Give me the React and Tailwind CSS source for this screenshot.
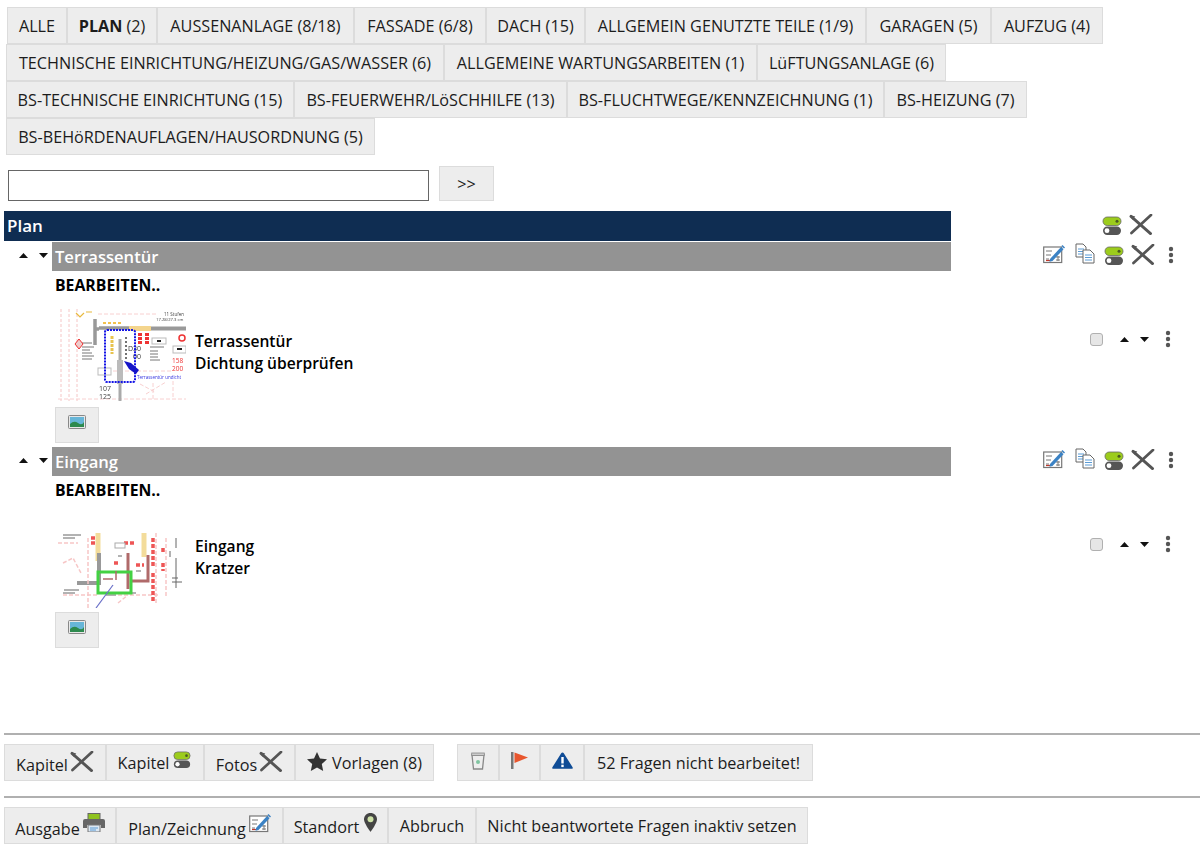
const font = "font-['Open_Sans','Noto_Sans',sans-serif]";

function Btn({ className = "", children }) {
  return (
    <div className={"flex h-full shrink-0 items-center justify-center whitespace-nowrap border border-[#dcdcdc] bg-[#ededed] pt-[2px] text-[16.2px] text-[#1c1c1c] " + className}>
      {children}
    </div>
  );
}

function Toggle({ className = "" }) {
  return (
    <svg viewBox="0 0 20 20" className={className}>
      <rect x="1" y="1" width="18" height="8.500" rx="4.200" fill="#9ccc1c" stroke="#666" strokeWidth="0.800" />
      <circle cx="15" cy="5.200" r="1.500" fill="#4a5a20" />
      <rect x="1" y="10.500" width="18" height="8.500" rx="4.200" fill="#555" />
      <circle cx="5" cy="14.700" r="2.400" fill="#fff" />
    </svg>
  );
}

function Cross({ className = "" }) {
  return (
    <svg viewBox="0 0 24 22" className={className}>
      <path d="M1.500 2.500 L22 20.500" stroke="#555" strokeWidth="3" strokeLinecap="round" />
      <path d="M22.500 1 L2 20" stroke="#555" strokeWidth="2.800" strokeLinecap="round" />
      <path d="M0.500 1 L6 2.500 L3 6 Z" fill="#555" />
    </svg>
  );
}

function EditNote({ className = "" }) {
  return (
    <svg viewBox="0 0 22 20" className={className}>
      <rect x="0.700" y="3" width="18" height="15.500" fill="#fff" stroke="#777" strokeWidth="1.200" />
      <path d="M3 7h6M3 11h5M3 15h3M13 13h4M13 16h4M15 12v5" stroke="#777" strokeWidth="1" fill="none" />
      <path d="M3 16.500h4" stroke="#c0392b" strokeWidth="1.200" />
      <path d="M7 15 L18 3 L20.500 5.200 L9.500 17 L6.500 17.800 Z" fill="#3b82c4" />
      <path d="M19 1.500 L21.500 4" stroke="#3b82c4" strokeWidth="1.500" />
    </svg>
  );
}

function CopyDoc({ className = "" }) {
  return (
    <svg viewBox="0 0 20 21" className={className}>
      <path d="M1 1h7l3 3v10H1z" fill="#fff" stroke="#666" strokeWidth="1" />
      <path d="M3 6h6M3 8.500h6M3 11h5" stroke="#5b9bd5" strokeWidth="1" />
      <path d="M8 7h7l4 4v9H8z" fill="#fff" stroke="#666" strokeWidth="1" />
      <path d="M10 12h7M10 14.500h7M10 17h7" stroke="#5b9bd5" strokeWidth="1" />
    </svg>
  );
}

function Kebab({ className = "" }) {
  return (
    <svg viewBox="0 0 6 18" className={className}>
      <circle cx="3" cy="3" r="2.200" fill="#555" />
      <circle cx="3" cy="9" r="2.200" fill="#555" />
      <circle cx="3" cy="15" r="2.200" fill="#555" />
    </svg>
  );
}

function Arrows({ className = "" }) {
  return (
    <div className={"flex items-center " + className}>
      <svg viewBox="0 0 9 5" className="h-[5px] w-[9px]"><path d="M4.500 0 L9 5 H0 Z" fill="#111" /></svg>
      <svg viewBox="0 0 9 5" className="ml-[11px] h-[5px] w-[9px]"><path d="M0 0 H9 L4.500 5 Z" fill="#111" /></svg>
    </div>
  );
}

function PictureIcon() {
  return (
    <svg viewBox="0 0 18 14" className="h-[14px] w-[18px]">
      <rect x="0.500" y="0.500" width="17" height="13" rx="1" fill="#e8e8e8" stroke="#888" />
      <rect x="2" y="2" width="14" height="10" fill="#67b6d8" />
      <path d="M2 9 Q6 5 10 8 T16 7 V12 H2 Z" fill="#2d8a4e" />
    </svg>
  );
}

function PlanThumbA() {
  return (
    <svg viewBox="0 0 128 92" className="h-[92px] w-[128px] shrink-0 blur-[0.3px]">
      <rect width="128" height="92" fill="#fff" />
      <path d="M3 0v92M11 0v92M19 0v92" stroke="#f5c6c6" strokeWidth="1" strokeDasharray="3 2" />
      <path d="M0 90h128M40 5h60M55 62h60M95 74v16M115 72v18M82 75l15 8M88 85l20-12" stroke="#f8d0d0" strokeWidth="1" strokeDasharray="4 2" />
      <path d="M37 10v26 M37 20h4 M41 19h30" stroke="#999" strokeWidth="3.500" fill="none" />
      <rect x="71" y="17" width="22" height="5" fill="#f4d58d" />
      <path d="M93 19.500h35" stroke="#999" strokeWidth="4" />
      <path d="M18 4l4 4 4-4M28 3h6" stroke="#e8b93e" strokeWidth="1.200" fill="none" />
      <path d="M45 14h20" stroke="#f2c14e" strokeWidth="2" strokeDasharray="3 2" />
      <path d="M62 30v62" stroke="#aaa" strokeWidth="3" />
      <rect x="59" y="51" width="6" height="24" fill="#bbb" />
      <path d="M24 34h10M24 38h12M24 41h8M24 44h10M24 47h12M24 50h10" stroke="#777" strokeWidth="1" />
      <path d="M92 38h14M92 42h8M92 45h8M92 48h8M92 51h10" stroke="#777" strokeWidth="1" />
      <rect x="94" y="29" width="14" height="6" fill="#fff" stroke="#bbb" /><rect x="99" y="31" width="4" height="2" fill="#222" />
      <rect x="115" y="37" width="13" height="7" fill="#fff" stroke="#bbb" /><rect x="119" y="39" width="5" height="2" fill="#222" />
      <rect x="40" y="59" width="13" height="7" fill="#fff" stroke="#bbb" />
      <circle cx="124" cy="29" r="3" fill="none" stroke="#e33" strokeWidth="1.500" />
      <path d="M82 24v12M89 24v12" stroke="#e33" strokeWidth="4" strokeDasharray="3 1" />
      <text x="114" y="54" fontSize="6.500" fill="#e33">158</text>
      <text x="114" y="62" fontSize="6.500" fill="#e33">200</text>
      <text x="106" y="7" fontSize="4.500" fill="#444">11 Stufen</text>
      <text x="98" y="12" fontSize="4.200" fill="#444">17.28/27.3 cm</text>
      <text x="41" y="82" fontSize="7" fill="#444">107</text>
      <text x="41" y="90" fontSize="7" fill="#444">125</text>
      <path d="M54 27v18" stroke="#e8c34e" strokeWidth="3" strokeDasharray="3 1" />
      <path d="M68 28v22" stroke="#444" strokeWidth="1.500" strokeDasharray="2 2" />
      <text x="70" y="42" fontSize="7" fill="#333">D</text>
      <text x="75" y="42" fontSize="7" fill="#333">30</text>
      <text x="75" y="50" fontSize="7" fill="#333">00</text>
      <path d="M21 30l-4 5 4 5 4-5z" fill="#ecc" stroke="#e33" />
      <rect x="47" y="21" width="30" height="52" rx="2" fill="none" stroke="#1414e6" strokeWidth="2" strokeDasharray="2 1" />
      <path d="M66 52 L73 54 L81 61 L78 65 L71 60 Z" fill="#1414c8" />
      <text x="79" y="70" fontSize="4.500" fill="#3232e0">Terrassentür undicht</text>
    </svg>
  );
}

function PlanThumbB() {
  return (
    <svg viewBox="0 0 128 75" className="h-[75px] w-[128px] shrink-0 blur-[0.3px]">
      <rect width="128" height="75" fill="#fff" />
      <path d="M40 0v28" stroke="#f3dc9b" strokeWidth="5" />
      <path d="M86 0v24" stroke="#f3dc9b" strokeWidth="5" />
      <path d="M41 20v30H19" stroke="#999" strokeWidth="4" fill="none" />
      <path d="M70 20v36M90 22v26H72" stroke="#b06a6a" strokeWidth="3" fill="none" />
      <path d="M30 5v70M98 0v70M108 5v60M60 62h40M5 62h35M0 10h20M5 30l10-5 8 15M60 70l10-8" stroke="#f7c6c6" strokeWidth="1.500" strokeDasharray="4 2" fill="none" />
      <path d="M33 5h5M33 10h5M56 30h6M78 32h8M66 10h10M95 5v30M95 40v30M105 15v5M105 30v8" stroke="#e55" strokeWidth="3.500" strokeDasharray="4 2" />
      <path d="M5 2h18M5 5h12M6 57h15M5 60h12M48 62h10M70 60h8M60 23h4M78 38h5M112 18v6M114 45h6M114 49h10M118 25v30M118 5v10" stroke="#666" strokeWidth="1" />
      <rect x="57" y="10" width="10" height="5" fill="#fff" stroke="#aaa" />
      <rect x="40" y="39" width="33" height="21" fill="none" stroke="#43d143" strokeWidth="3" />
      <path d="M45 46h10M58 38v9" stroke="#b06a6a" strokeWidth="1.500" />
      <path d="M55 52 L38 75" stroke="#6a70c8" strokeWidth="1.200" />
    </svg>
  );
}

function ImageBtn() {
  return (
    <div className="ml-[55px] flex h-[36px] w-[44px] items-start justify-center border border-[#dcdcdc] bg-[#ededed] pt-[7px]">
      <PictureIcon />
    </div>
  );
}

function GroupHeader({ title }) {
  return (
    <div className="flex h-[29px]">
      <Arrows className="ml-[19px] mb-[3px] w-[33px]" />
      <div className="flex w-[899px] items-center bg-[#939393] pl-[3px] pt-[1px] text-[16.600px] font-semibold leading-none text-white">{title}</div>
      <div className="flex items-start">
        <EditNote className="ml-[92px] mt-[2px] h-[20px] w-[22px]" />
        <CopyDoc className="ml-[10px] mt-[1px] h-[21px] w-[20px]" />
        <Toggle className="ml-[9px] mt-[4px] h-[20px] w-[20px]" />
        <Cross className="ml-[7px] mt-[2px] h-[21px] w-[24px]" />
        <Kebab className="ml-[13px] mt-[4px] h-[18px] w-[6px]" />
      </div>
    </div>
  );
}

function Editing() {
  return <div className="flex h-[28px] items-center pl-[55px] pt-[1px] text-[15.800px] font-bold text-black">BEARBEITEN..</div>;
}

function Item({ thumb, line1, line2, textPad, ctrlPad }) {
  return (
    <div className="flex justify-between pr-[29px]">
      <div className="flex pl-[58px]">
        {thumb}
        <div className={"pl-[9px] text-[15.600px] font-semibold leading-[22px] text-black " + textPad}>
          <div>{line1}</div>
          <div>{line2}</div>
        </div>
      </div>
      <div className={"flex h-fit items-center " + ctrlPad}>
        <div className="h-[13px] w-[13px] rounded-[3px] border border-[#b0b0b0] bg-[#e6e6e6]" />
        <Arrows className="ml-[17px]" />
        <Kebab className="ml-[16px] h-[18px] w-[6px]" />
      </div>
    </div>
  );
}

export default function App() {
  return (
    <div className={"h-[852px] w-full overflow-hidden bg-white pt-[7px] " + font}>
      <div className="flex h-[37px] pl-[7px]">
        <Btn className="w-[60px]">ALLE</Btn>
        <Btn className="w-[90px]"><b className="mr-[4px]">PLAN</b> (2)</Btn>
        <Btn className="w-[197px]">AUSSENANLAGE (8/18)</Btn>
        <Btn className="w-[132px]">FASSADE (6/8)</Btn>
        <Btn className="w-[99px]">DACH (15)</Btn>
        <Btn className="w-[281px]">ALLGEMEIN GENUTZTE TEILE (1/9)</Btn>
        <Btn className="w-[125px]">GARAGEN (5)</Btn>
        <Btn className="w-[112px]">AUFZUG (4)</Btn>
      </div>
      <div className="flex h-[37px] pl-[6px]">
        <Btn className="w-[438px]">TECHNISCHE EINRICHTUNG/HEIZUNG/GAS/WASSER (6)</Btn>
        <Btn className="w-[313px]">ALLGEMEINE WARTUNGSARBEITEN (1)</Btn>
        <Btn className="w-[189px]">LüFTUNGSANLAGE (6)</Btn>
      </div>
      <div className="flex h-[37px] pl-[6px]">
        <Btn className="w-[288px]">BS-TECHNISCHE EINRICHTUNG (15)</Btn>
        <Btn className="w-[273px]">BS-FEUERWEHR/LöSCHHILFE (13)</Btn>
        <Btn className="w-[317px]">BS-FLUCHTWEGE/KENNZEICHNUNG (1)</Btn>
        <Btn className="w-[143px]">BS-HEIZUNG (7)</Btn>
      </div>
      <div className="flex h-[37px] pl-[6px]">
        <Btn className="w-[369px]">BS-BEHöRDENAUFLAGEN/HAUSORDNUNG (5)</Btn>
      </div>

      <div className="mt-[11px] flex h-[35px] items-end pl-[8px]">
        <input className="h-[31px] w-[421px] border border-[#666] bg-white" />
        <div className="ml-[10px] h-[35px]">
          <Btn className="w-[55px] text-[13.500px]">&gt;&gt;</Btn>
        </div>
      </div>

      <div className="mt-[10px] flex h-[30px]">
        <div className="ml-[4px] flex w-[947px] items-center bg-[#0f2d52] pl-[3px] text-[17px] font-semibold text-white">Plan</div>
        <div className="flex items-start pt-[3px]">
          <Toggle className="ml-[151px] mt-[2px] h-[20px] w-[20px]" />
          <Cross className="ml-[7px] h-[21px] w-[24px]" />
        </div>
      </div>

      <div className="mt-[1px]"><GroupHeader title="Terrassentür" /></div>
      <Editing />
      <div className="mt-[10px]">
        <Item thumb={<PlanThumbA />} line1="Terrassentür" line2="Dichtung überprüfen" textPad="pt-[21px]" ctrlPad="pt-[21px]" />
      </div>
      <div className="mt-[6px]"><ImageBtn /></div>

      <div className="mt-[4px]"><GroupHeader title="Eingang" /></div>
      <Editing />
      <div className="mt-[29px]">
        <Item thumb={<PlanThumbB />} line1="Eingang" line2="Kratzer" textPad="pt-[2px]" ctrlPad="pt-[2px]" />
      </div>
      <div className="mt-[4px]"><ImageBtn /></div>

      <div className="ml-[4px] mt-[85px] h-[2px] bg-[#b0b0b0]" />
      <div className="mt-[9px] flex h-[37px] pl-[4px]">
        <Btn className="w-[102px]"><span className="mt-[4px]">Kapitel</span><Cross className="ml-[2px] mb-[5px] h-[21px] w-[24px]" /></Btn>
        <Btn className="w-[98px]"><span>Kapitel</span><Toggle className="ml-[3px] mb-[7px] h-[18px] w-[20px]" /></Btn>
        <Btn className="w-[91px]"><span className="mt-[4px]">Fotos</span><Cross className="ml-[2px] mb-[5px] h-[21px] w-[24px]" /></Btn>
        <Btn className="w-[139px]">
          <svg viewBox="0 0 20 19" className="mb-[5px] mr-[5px] h-[19px] w-[20px]"><path d="M10 0l3 6.500 7 .8-5.200 4.800 1.400 6.900L10 15.500 3.800 19l1.400-6.900L0 7.300l7-.8z" fill="#333" /></svg>
          Vorlagen (8)
        </Btn>
        <div className="w-[23px]" />
        <Btn className="w-[42px]">
          <svg viewBox="0 0 14 18" className="mb-[6px] h-[18px] w-[14px]">
            <path d="M1 3h12l-1.500 14h-9z" fill="#eee" stroke="#888" strokeWidth="1.300" />
            <rect x="0.700" y="1" width="12.600" height="2.500" fill="#ccc" stroke="#888" strokeWidth="0.800" />
            <circle cx="7" cy="10" r="2" fill="#7fc4a0" />
          </svg>
        </Btn>
        <Btn className="w-[41px]">
          <svg viewBox="0 0 18 17" className="mb-[6px] h-[17px] w-[18px]">
            <rect x="0" y="0" width="2.500" height="17" fill="#777" />
            <path d="M3.500 0.500L17 5.500 3.500 11z" fill="#e8562e" />
          </svg>
        </Btn>
        <Btn className="w-[44px]">
          <svg viewBox="0 0 21 17" className="mb-[6px] h-[17px] w-[21px]">
            <path d="M10.500 0.500c.6 0 1 .3 1.300.8l8.800 14c.4.8 0 1.500-.9 1.500H1.300c-.9 0-1.300-.7-.9-1.500l8.800-14c.3-.5.700-.8 1.300-.8z" fill="#0f4c96" />
            <rect x="9.300" y="5" width="2.400" height="6.500" fill="#fff" />
            <rect x="9.300" y="12.700" width="2.400" height="2.400" fill="#fff" />
          </svg>
        </Btn>
        <Btn className="w-[229px]">52 Fragen nicht bearbeitet!</Btn>
      </div>

      <div className="ml-[4px] mt-[15px] h-[2px] bg-[#b0b0b0]" />
      <div className="mt-[9px] flex h-[37px] pl-[4px]">
        <Btn className="w-[112px]">
          <span className="mt-[6px]">Ausgabe</span>
          <svg viewBox="0 0 22 19" className="mb-[9px] ml-[3px] h-[19px] w-[22px]">
            <rect x="5" y="0.500" width="12" height="6" fill="#8fc31f" stroke="#666" />
            <path d="M0 8a2 2 0 0 1 2-2h18a2 2 0 0 1 2 2v7h-4v-3H4v3H0z" fill="#666" />
            <rect x="5" y="12" width="12" height="7" fill="#dbe7f3" stroke="#777" />
            <path d="M7 15h8M7 17h6" stroke="#5b9bd5" />
          </svg>
        </Btn>
        <Btn className="w-[167px]">
          <span className="mt-[6px]">Plan/Zeichnung</span>
          <EditNote className="mb-[7px] ml-[3px] h-[20px] w-[22px]" />
        </Btn>
        <Btn className="w-[105px]">
          <span className="mt-[1px]">Standort</span>
          <svg viewBox="0 0 13 19" className="mb-[8px] ml-[5px] h-[19px] w-[13px]">
            <path d="M6.500 0C2.900 0 0 2.700 0 6.300 0 10.500 6.500 19 6.500 19S13 10.500 13 6.300C13 2.700 10.100 0 6.500 0z" fill="#444" />
            <circle cx="6.500" cy="6.300" r="3" fill="#cfe3a8" />
          </svg>
        </Btn>
        <Btn className="w-[88px]">Abbruch</Btn>
        <Btn className="w-[332px]">Nicht beantwortete Fragen inaktiv setzen</Btn>
      </div>
    </div>
  );
}
